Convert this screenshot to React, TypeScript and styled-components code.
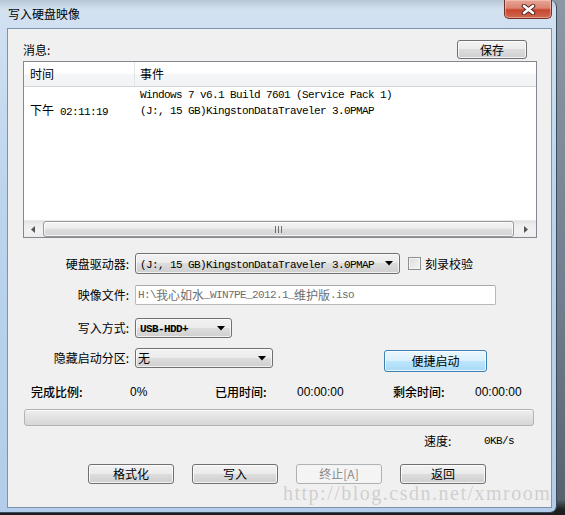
import React from "react";
import styled, { createGlobalStyle } from "styled-components";

const GlobalStyle = createGlobalStyle`
  html, body { margin: 0; padding: 0; }
  body {
    width: 565px;
    height: 515px;
    overflow: hidden;
    background: linear-gradient(to bottom, #8c98a6 0, #6f7d8c 60%, #58636f 97%, #1e1e1e 99%);
    font-family: "Noto Sans CJK SC", "Liberation Sans", sans-serif;
    font-size: 12px;
    color: #000;
  }
`;

const Window = styled.div`
  position: relative;
  box-sizing: border-box;
  width: 557px;
  height: 513px;
  display: flex;
  flex-direction: column;
  padding: 0 4px 4px 7px;
  background: linear-gradient(
    to bottom,
    #b7c6d6 0,
    #d4e2f0 10px,
    #cfe0f2 28px,
    #bcd4ec 200px,
    #b3cdea 100%
  );
  border-right: 1px solid #3b4a5a;
  border-bottom: 1px solid #3b4a5a;
  border-radius: 0 7px 7px 0;
`;

const TitleBar = styled.div`
  height: 28px;
  display: flex;
  justify-content: space-between;
  align-items: flex-start;
`;

const Title = styled.div`
  padding-left: 1px;
  line-height: 28px;
  font-size: 12px;
  color: #000;
`;

const CloseButton = styled.div`
  box-sizing: border-box;
  width: 48px;
  height: 19px;
  display: flex;
  align-items: center;
  justify-content: center;
  border: 1px solid #6e2f26;
  border-top: none;
  border-radius: 0 0 5px 5px;
  background: linear-gradient(
    to bottom,
    #e7a595 0,
    #dc8471 45%,
    #c8452f 55%,
    #cf6a50 100%
  );
  box-shadow: inset 0 0 0 1px rgba(255, 220, 210, 0.45);
`;

const Client = styled.div`
  flex: 1;
  box-sizing: border-box;
  display: flex;
  flex-direction: column;
  border: 1px solid #7e92aa;
  background: #f0f0f0;
  padding: 0 14px 0 15px;
`;

const MessageBar = styled.div`
  margin-top: 11px;
  height: 19px;
  display: flex;
  align-items: center;
  justify-content: space-between;
  padding-right: 10px;
`;

const Text = styled.span`
  font-family: "Noto Sans CJK SC", sans-serif;
  font-size: 12px;
  line-height: 16px;
  white-space: nowrap;
`;

const Cjk = styled.span`
  font-family: "Noto Sans CJK SC", sans-serif;
  font-size: 12px;
  letter-spacing: 0;
`;

const Mono = styled.span<{ $bold?: boolean }>`
  font-family: "Liberation Mono", "Noto Sans CJK SC", monospace;
  font-size: 11px;
  letter-spacing: -0.6px;
  font-weight: ${(p) => (p.$bold ? 700 : 400)};
  white-space: pre;
`;

const Button = styled.div<{ $w: number; $h?: number; $variant?: "normal" | "primary" | "disabled" }>`
  box-sizing: border-box;
  width: ${(p) => p.$w}px;
  height: ${(p) => p.$h ?? 20}px;
  display: flex;
  align-items: center;
  justify-content: center;
  border-radius: 3px;
  font-family: "Noto Sans CJK SC", sans-serif;
  font-size: 12px;
  line-height: 16px;
  border: 1px solid
    ${(p) => (p.$variant === "primary" ? "#3c7fb1" : p.$variant === "disabled" ? "#adb2b5" : "#707070")};
  color: ${(p) => (p.$variant === "disabled" ? "#8a8a8a" : "#000")};
  background: ${(p) =>
    p.$variant === "primary"
      ? "linear-gradient(to bottom, #eaf6fd 0, #d9f0fc 50%, #bee6fd 50%, #a7d9f5 100%)"
      : p.$variant === "disabled"
      ? "#f4f4f4"
      : "linear-gradient(to bottom, #f2f2f2 0, #ebebeb 50%, #dddddd 50%, #cfcfcf 100%)"};
  box-shadow: ${(p) => (p.$variant === "disabled" ? "none" : "inset 0 0 0 1px rgba(255,255,255,0.75)")};
`;

const ListBox = styled.div`
  margin-top: 2px;
  box-sizing: border-box;
  height: 177px;
  display: flex;
  flex-direction: column;
  border: 1px solid #828790;
  background: #fff;
`;

const ListHeader = styled.div`
  box-sizing: border-box;
  height: 25px;
  display: flex;
  border-bottom: 1px solid #d5d5d5;
  background: linear-gradient(to bottom, #ffffff 0, #ffffff 45%, #f4f5f6 55%, #f2f3f4 100%);
`;

const HeaderCell = styled.div<{ $w?: number; $divider?: boolean }>`
  box-sizing: border-box;
  ${(p) => (p.$w ? `width: ${p.$w}px;` : "flex: 1;")}
  padding-left: ${(p) => (p.$divider ? 6 : 5)}px;
  display: flex;
  align-items: center;
  border-right: ${(p) => (p.$divider ? "1px solid #e3e4e6" : "none")};
  font-size: 12px;
  line-height: 16px;
`;

const ListBody = styled.div`
  flex: 1;
  display: flex;
  flex-direction: column;
`;

const ListRow = styled.div`
  height: 48px;
  display: flex;
  align-items: center;
`;

const TimeCell = styled.div`
  box-sizing: border-box;
  width: 111px;
  padding-left: 6px;
  line-height: 16px;
  white-space: nowrap;
`;

const EventCell = styled.div`
  align-self: flex-start;
  padding-left: 5px;
  display: flex;
  flex-direction: column;
  line-height: 16px;
`;

const HScroll = styled.div`
  height: 17px;
  display: flex;
  background: linear-gradient(to bottom, #e2e2e2 0, #ececec 20%, #f2f2f2 60%, #ececec 100%);
  border-top: 1px solid #e9e9e9;
  box-sizing: border-box;
`;

const ScrollArrow = styled.div<{ $shift?: number }>`
  width: 17px;
  display: flex;
  align-items: center;
  justify-content: center;
  padding-right: ${(p) => p.$shift ?? 0}px;
  box-sizing: border-box;
`;

const ScrollThumb = styled.div`
  flex: 1;
  margin: 0 5px 0 2px;
  box-sizing: border-box;
  border: 1px solid #999999;
  border-radius: 3px;
  background: linear-gradient(to bottom, #f4f4f4 0, #ececec 45%, #dcdcdc 55%, #d4d4d4 100%);
  box-shadow: inset 0 0 0 1px rgba(255, 255, 255, 0.7);
  display: flex;
  align-items: center;
  justify-content: center;
`;

const FormRow = styled.div<{ $top: number }>`
  margin-top: ${(p) => p.$top}px;
  display: flex;
  align-items: flex-start;
`;

const FieldLabel = styled.div<{ $h: number }>`
  width: 106px;
  height: ${(p) => p.$h}px;
  margin-right: 6px;
  display: flex;
  align-items: center;
  justify-content: flex-end;
  font-size: 12px;
  line-height: 16px;
  white-space: nowrap;
`;

const Combo = styled.div<{ $w: number; $h?: number; $pad?: number }>`
  box-sizing: border-box;
  width: ${(p) => p.$w}px;
  height: ${(p) => p.$h ?? 20}px;
  display: flex;
  align-items: center;
  padding: 0 6px 0 ${(p) => p.$pad ?? 4}px;
  border: 1px solid #707070;
  border-radius: 3px;
  background: linear-gradient(to bottom, #f2f2f2 0, #ebebeb 50%, #dddddd 50%, #cfcfcf 100%);
  box-shadow: inset 0 0 0 1px rgba(255, 255, 255, 0.7);
  line-height: 16px;
  overflow: hidden;
`;

const ComboValue = styled.div`
  flex: 1;
  white-space: nowrap;
  overflow: hidden;
`;

const CheckGroup = styled.div`
  margin-left: 8px;
  height: 21px;
  display: flex;
  align-items: center;
  gap: 4px;
`;

const CheckBox = styled.div`
  box-sizing: border-box;
  width: 13px;
  height: 13px;
  border: 1px solid #8e8f8f;
  background: linear-gradient(135deg, #dcdcdc 0, #f6f6f6 100%);
  box-shadow: inset 0 0 0 1px #f4f4f4;
`;

const TextInput = styled.div<{ $w: number }>`
  box-sizing: border-box;
  width: ${(p) => p.$w}px;
  height: 20px;
  display: flex;
  align-items: center;
  padding-left: 2px;
  border: 1px solid #b5b8bd;
  border-top-color: #a5a9af;
  border-radius: 2px;
  background: #fff;
  color: #6d6d6d;
  line-height: 16px;
  white-space: nowrap;
  overflow: hidden;
`;

const SideButtonSlot = styled.div`
  margin-left: 111px;
  margin-top: 2px;
`;

const StatsRow = styled.div`
  margin-top: 12px;
  padding-left: 8px;
  height: 16px;
  display: grid;
  grid-template-columns: 99px 85px 82px 96px 82px auto;
  align-items: center;
`;

const StatLabel = styled.span`
  font-family: "Noto Sans CJK SC", sans-serif;
  font-size: 12px;
  font-weight: 500;
  line-height: 16px;
  white-space: nowrap;
`;

const StatValue = styled.span`
  font-family: "Liberation Sans", sans-serif;
  font-size: 12px;
  line-height: 16px;
  white-space: nowrap;
`;

const Progress = styled.div`
  margin: 9px 0 0 1px;
  box-sizing: border-box;
  width: 510px;
  height: 17px;
  border: 1px solid #b2b2b2;
  border-radius: 3px;
  background: linear-gradient(to bottom, #f0f0f0 0, #e4e4e4 40%, #d7d7d7 100%);
  box-shadow: inset 0 1px 0 #fafafa;
`;

const SpeedRow = styled.div`
  margin-top: 7px;
  padding-left: 401px;
  height: 16px;
  display: grid;
  grid-template-columns: 60px auto;
  align-items: center;
`;

const ActionBar = styled.div`
  margin-top: 15px;
  padding-left: 65px;
  display: flex;
  gap: 18px;
`;

const Watermark = styled.div`
  position: absolute;
  left: 283px;
  top: 483px;
  font-family: "Liberation Serif", serif;
  font-size: 20px;
  line-height: 20px;
  letter-spacing: 1.5px;
  color: rgba(150, 150, 150, 0.38);
  white-space: nowrap;
  pointer-events: none;
`;

const Arrow = ({ dir }: { dir: "down" | "left" | "right" }) => {
  if (dir === "down")
    return (
      <svg width="8" height="5" viewBox="0 0 8 5">
        <polygon points="0,0 8,0 4,4.5" fill="#000" />
      </svg>
    );
  if (dir === "left")
    return (
      <svg width="4" height="7" viewBox="0 0 4 7">
        <polygon points="4,0 4,7 0,3.5" fill="#555" />
      </svg>
    );
  return (
    <svg width="4" height="7" viewBox="0 0 4 7">
      <polygon points="0,0 0,7 4,3.5" fill="#555" />
    </svg>
  );
};

const Grip = () => (
  <svg width="7" height="7" viewBox="0 0 7 7">
    <path d="M0.5 0 V7 M3.5 0 V7 M6.5 0 V7" stroke="#6f6f6f" strokeWidth="1" />
  </svg>
);

const CloseGlyph = () => (
  <svg width="15" height="11" viewBox="0 0 15 11">
    <path d="M3 2 L12 9 M12 2 L3 9" stroke="#5a2b25" strokeWidth="4.6" strokeLinecap="round" />
    <path d="M3 2 L12 9 M12 2 L3 9" stroke="#ffffff" strokeWidth="2.6" strokeLinecap="round" />
  </svg>
);

export default function App() {
  return (
    <>
      <GlobalStyle />
      <Window>
        <TitleBar>
          <Title>写入硬盘映像</Title>
          <CloseButton>
            <CloseGlyph />
          </CloseButton>
        </TitleBar>
        <Client>
          <MessageBar>
            <Text>消息:</Text>
            <Button $w={70} $h={19}>
              保存
            </Button>
          </MessageBar>
          <ListBox>
            <ListHeader>
              <HeaderCell $w={111} $divider>
                时间
              </HeaderCell>
              <HeaderCell>事件</HeaderCell>
            </ListHeader>
            <ListBody>
              <ListRow>
                <TimeCell>
                  <Cjk>下午</Cjk>
                  <Mono> 02:11:19</Mono>
                </TimeCell>
                <EventCell>
                  <Mono>Windows 7 v6.1 Build 7601 (Service Pack 1)</Mono>
                  <Mono>(J:, 15 GB)KingstonDataTraveler 3.0PMAP</Mono>
                </EventCell>
              </ListRow>
            </ListBody>
            <HScroll>
              <ScrollArrow>
                <Arrow dir="left" />
              </ScrollArrow>
              <ScrollThumb>
                <Grip />
              </ScrollThumb>
              <ScrollArrow $shift={4}>
                <Arrow dir="right" />
              </ScrollArrow>
            </HScroll>
          </ListBox>

          <FormRow $top={15}>
            <FieldLabel $h={21}>硬盘驱动器:</FieldLabel>
            <Combo $w={265} $h={21}>
              <ComboValue>
                <Mono>(J:, 15 GB)KingstonDataTraveler 3.0PMAP</Mono>
              </ComboValue>
              <Arrow dir="down" />
            </Combo>
            <CheckGroup>
              <CheckBox />
              <Text>刻录校验</Text>
            </CheckGroup>
          </FormRow>

          <FormRow $top={11}>
            <FieldLabel $h={20}>映像文件:</FieldLabel>
            <TextInput $w={361}>
              <Mono>H:\</Mono>
              <Cjk>我心如水</Cjk>
              <Mono>_WIN7PE_2012.1_</Mono>
              <Cjk>维护版</Cjk>
              <Mono>.iso</Mono>
            </TextInput>
          </FormRow>

          <FormRow $top={13}>
            <FieldLabel $h={20}>写入方式:</FieldLabel>
            <Combo $w={97}>
              <ComboValue>
                <Mono $bold>USB-HDD+</Mono>
              </ComboValue>
              <Arrow dir="down" />
            </Combo>
          </FormRow>

          <FormRow $top={10}>
            <FieldLabel $h={20}>隐藏启动分区:</FieldLabel>
            <Combo $w={138} $pad={2}>
              <ComboValue>
                <Cjk>无</Cjk>
              </ComboValue>
              <Arrow dir="down" />
            </Combo>
            <SideButtonSlot>
              <Button $w={103} $h={22} $variant="primary">
                便捷启动
              </Button>
            </SideButtonSlot>
          </FormRow>

          <StatsRow>
            <StatLabel>完成比例:</StatLabel>
            <StatValue>0%</StatValue>
            <StatLabel>已用时间:</StatLabel>
            <StatValue>00:00:00</StatValue>
            <StatLabel>剩余时间:</StatLabel>
            <StatValue>00:00:00</StatValue>
          </StatsRow>

          <Progress />

          <SpeedRow>
            <Text>速度:</Text>
            <Mono>0KB/s</Mono>
          </SpeedRow>

          <ActionBar>
            <Button $w={86}>格式化</Button>
            <Button $w={86}>写入</Button>
            <Button $w={86} $variant="disabled">
              终止[A]
            </Button>
            <Button $w={86}>返回</Button>
          </ActionBar>
        </Client>
        <Watermark>http://blog.csdn.net/xmroom</Watermark>
      </Window>
    </>
  );
}
